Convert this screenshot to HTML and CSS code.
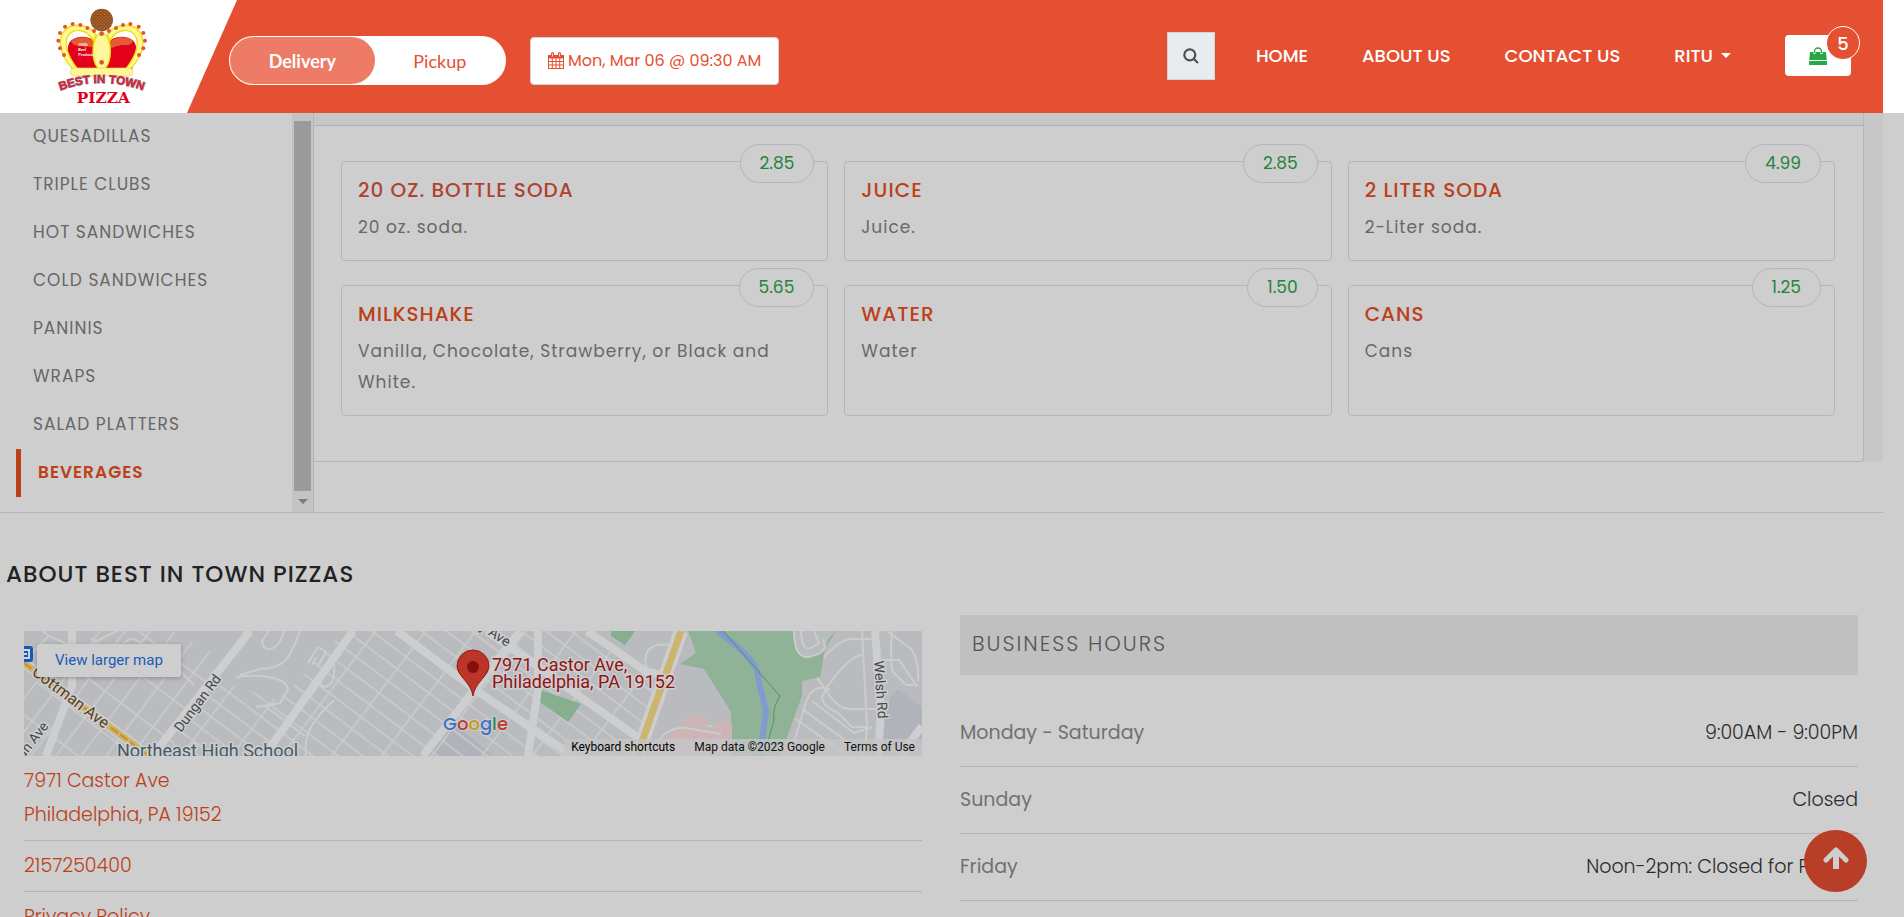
FILE: index.html
```html
<!DOCTYPE html>
<html lang="en">
<head>
<meta charset="utf-8">
<title>Best In Town Pizza</title>
<link rel="stylesheet" href="styles.css">
</head>
<body>
<header class="site-header">
  <a class="brand" href="#" aria-label="Best In Town Pizza">
    <svg class="brand-logo" viewBox="0 0 390 339" role="img" aria-label="Best In Town Pizza">
      <defs>
        <pattern id="crumb" width="10" height="10" patternUnits="userSpaceOnUse">
          <rect width="10" height="10" fill="#8b4a1c"/><circle cx="3" cy="3" r="2" fill="#d09048"/><circle cx="8" cy="8" r="2" fill="#c58238"/>
        </pattern>
        <path id="arc" d="M54 274 Q185 224 317 274"/>
      </defs>
      <circle cx="185" cy="60" r="34" fill="url(#crumb)"/>
      <path d="M96 208C84 170 76 140 92 122c24-20 66-14 82 12v74z" fill="#e2001a"/>
      <path d="M276 208c12-38 20-68 4-86-24-20-66-14-82 12v74z" fill="#e2001a"/>
      <path d="M92 124c22-20 62-14 76 8-8 22-20-2-32 12-12-16-26 6-44-20z" fill="#e55a32"/>
      <path d="M280 124c-22-20-62-14-76 8 8 22 20 4 32 6 14-8 30 6 44-14z" fill="#e55a32"/>
      <path d="M104 210C66 180 52 130 68 100 86 66 144 68 168 104l-8 18C140 84 96 82 82 112c-12 30 6 62 28 92z" fill="#fff59a" stroke="#ece400" stroke-width="4"/>
      <path d="M266 210c38-30 52-80 36-110-18-34-76-32-100 4l8 18c20-38 64-40 78-10 12 30-6 62-28 92z" fill="#fff59a" stroke="#ece400" stroke-width="4"/>
      <path d="M185 98c34 8 34 96 5 110h-10c-29-14-29-102 5-110z" fill="#fff59a" stroke="#ece400" stroke-width="4"/>
      <rect x="91" y="204" width="188" height="24" rx="12" fill="#fff59a" stroke="#e6dc4a" stroke-width="2"/>
      <g fill="#e55230">
        <circle cx="55" cy="122" r="6"/><circle cx="60" cy="99" r="6"/><circle cx="75" cy="80" r="6"/><circle cx="98" cy="72" r="6"/><circle cx="121" cy="75" r="6"/><circle cx="142" cy="84" r="6"/><circle cx="162" cy="93" r="6"/><circle cx="60" cy="145" r="6"/><circle cx="72" cy="165" r="6"/>
        <circle cx="315" cy="122" r="6"/><circle cx="310" cy="99" r="6"/><circle cx="296" cy="80" r="6"/><circle cx="271" cy="72" r="6"/><circle cx="249" cy="75" r="6"/><circle cx="228" cy="84" r="6"/><circle cx="207" cy="93" r="6"/><circle cx="310" cy="145" r="6"/><circle cx="297" cy="165" r="6"/>
        <circle cx="185" cy="101" r="7"/><circle cx="185" cy="187" r="7"/>
      </g>
      <g class="logo-note"><text x="115" y="139">100%</text><text x="115" y="153">Beef</text><text x="115" y="167">Products</text></g>
      <text class="logo-arch"><textPath href="#arc" startOffset="50%">BEST IN TOWN</textPath></text>
      <text class="logo-name" x="190" y="309">PIZZA</text>
    </svg>
  </a>
  <div class="header-bar">
    <div class="order-tools">
      <div class="mode-toggle">
        <button class="mode mode-active" type="button">Delivery</button>
        <button class="mode" type="button">Pickup</button>
      </div>
      <button class="date-button" type="button">
        <svg class="calendar-icon" viewBox="0 0 16 17" aria-hidden="true"><path fill="currentColor" fill-rule="evenodd" d="M0 3h3V1.500a1.500 1.500 0 0 1 3 0V3h4V1.500a1.500 1.500 0 0 1 3 0V3h3v14H0zM1 6.500V9h2.800V6.500zm3.800 0V9h2.700V6.500zm3.700 0V9h2.700V6.500zm3.700 0V9H15V6.500zM1 10v2.500h2.800V10zm3.800 0v2.500h2.700V10zm3.700 0v2.500h2.700V10zm3.700 0v2.500H15V10zM1 13.500V16h2.800v-2.500zm3.800 0V16h2.700v-2.500zm3.700 0V16h2.700v-2.500zm3.700 0V16H15v-2.500z"/><path d="M4.500 1.500v3M11.500 1.500v3" stroke="#fff" stroke-width=".8"/></svg>
        Mon, Mar 06 @ 09:30 AM
      </button>
    </div>
    <div class="header-right">
      <button class="search-button" type="button" aria-label="Search">
        <svg viewBox="0 0 16 16" width="16" height="16" fill="none" stroke="#495057" stroke-width="2.200" aria-hidden="true"><circle cx="6.800" cy="6.800" r="5.500"/><path d="m10.700 10.700 4.300 4.300"/></svg>
      </button>
      <nav class="main-nav">
        <a href="#">HOME</a>
        <a href="#">ABOUT US</a>
        <a href="#">CONTACT US</a>
        <a href="#" class="user-link">RITU <span class="caret"></span></a>
      </nav>
      <button class="cart-button" type="button" aria-label="Cart, 5 items">
        <svg viewBox="0 0 18 18" width="18" height="18" aria-hidden="true"><path d="M5.500 6V4.500a3.500 3.500 0 0 1 7 0V6" fill="none" stroke="#28a745" stroke-width="1.300"/><path fill="#28a745" d="M1 5h3.500v2h2V5h5v2h2V5H17l.8 8H.2zM.1 14h17.800l.1 4H0z"/></svg>
        <span class="cart-count">5</span>
      </button>
    </div>
  </div>
</header>

<div class="page">
  <div class="menu-area">
    <aside class="sidebar">
      <ul class="category-list">
        <li><a href="#">QUESADILLAS</a></li>
        <li><a href="#">TRIPLE CLUBS</a></li>
        <li><a href="#">HOT SANDWICHES</a></li>
        <li><a href="#">COLD SANDWICHES</a></li>
        <li><a href="#">PANINIS</a></li>
        <li><a href="#">WRAPS</a></li>
        <li><a href="#">SALAD PLATTERS</a></li>
        <li><a href="#" class="current">BEVERAGES</a></li>
      </ul>
      <div class="scroll-track"><div class="scroll-thumb"></div><div class="scroll-arrow"></div></div>
    </aside>
    <main class="menu-main">
      <section class="menu-panel">
        <div class="panel-strip"></div>
        <div class="items">
          <article class="item"><span class="price">2.85</span><h3><a class="visited" href="#">20 OZ. BOTTLE SODA</a></h3><p>20 oz. soda.</p></article>
          <article class="item"><span class="price">2.85</span><h3><a href="#">JUICE</a></h3><p>Juice.</p></article>
          <article class="item"><span class="price">4.99</span><h3><a href="#">2 LITER SODA</a></h3><p>2-Liter soda.</p></article>
          <article class="item"><span class="price">5.65</span><h3><a href="#">MILKSHAKE</a></h3><p>Vanilla, Chocolate, Strawberry, or Black and White.</p></article>
          <article class="item"><span class="price">1.50</span><h3><a href="#">WATER</a></h3><p>Water</p></article>
          <article class="item"><span class="price">1.25</span><h3><a href="#">CANS</a></h3><p>Cans</p></article>
        </div>
      </section>
    </main>
  </div>

  <h2 class="about-title">ABOUT BEST IN TOWN PIZZAS</h2>
  <div class="about">
    <section class="contact">
      <div class="map">
        <svg class="map-art" viewBox="0 0 898 125" preserveAspectRatio="xMidYMid slice" role="img" aria-label="Map of 7971 Castor Ave">
          <defs>
            <pattern id="gridA" width="34" height="20" patternUnits="userSpaceOnUse" patternTransform="rotate(-53)"><path d="M0 0H34M0 0V20" stroke="#cbcccd" stroke-width="3" fill="none"/></pattern>
            <pattern id="gridB" width="40" height="15" patternUnits="userSpaceOnUse" patternTransform="rotate(37)"><path d="M0 0H40M0 0V15" stroke="#cbcccd" stroke-width="3" fill="none"/></pattern>
          </defs>
          <rect width="898" height="125" fill="#b9bbbe"/>
          <path d="M399 125 426 90 470 125zM874 58l24 18v49h-50l8-45z" fill="#b0b3ba"/>
          <path d="M0 60 75 0h75l60 34-70 91H0z" fill="url(#gridA)"/>
          <path d="M140 125 200 50l55 20 65-70h175l-90 125z" fill="url(#gridB)"/>
          <path d="M405 125 500 0h60l80 45-28 80z" fill="url(#gridB)"/>
          <g class="street">
            <path d="M0 30 25 5 18 0M25 5l23 10M48 22l45-22M100 12q8-8 16 0l40 28 14 14M260 0c-4 18-20 25-22 10l7-10M276 0c-8 18-10 38-40 38l-20 6M212 46c30-4 50 2 52 12l-8 14-24 4M310 32q2 22-10 24l-10-8M282 125c-2-18 2-32 28-56M281 105l-40-30"/>
            <path d="M284 32l10-16 8 5-8 14M288 34l4-8M623 40q-8-30 24-26M645 110l28-18 25 6"/>
            <path d="M838 0l5 95q0 12-5 30M848 8h-20c-14 0-40 28-38 34l15 22q10 14 20 14h35M838 24c-12 0-34 28-40 42 0 8 8 12 16 16l14 14h16M766 125l16-54q8-20 24-12M778 78l50 36M772 88l50 36M788 70l42 32 18-6M855 29h20l18 26M863 0l24 18q8 10 7 32M868 0q-2 20 0 40l14 14h12"/>
          </g>
          <path d="M664 0 672 22 656 33 680 38 707 81 708 125h48l22-60v-15l18-4 5-28 11-18z" fill="#90b398"/>
          <path d="M770 0c0 18 5 27 14 26l17-8 3-10L812 0z" fill="#b9bbbe"/>
          <path d="M770 0c0 18 5 27 14 26 10-2 16-6 17-10l-2-8M777 0c0 12 4 20 10 17l8-5-5-12" class="street"/>
          <path d="M514 58 557 73 544 91 514 70zM587 0h24l-10 14-14-9z" fill="#86ae8f"/>
          <path d="M656 95 664 83l20 5v12l10-9 14 2v32h-86z" fill="#cdb5b7"/>
          <path class="street" d="M634 110q12-15 28-13l35 6"/>
          <path d="M694 0c12 10 38 28 40 44s6 26 8 36l-6 45" fill="none" stroke="#7f9bd0" stroke-width="6"/>
          <path d="M699 0 756 65q-8 12-6 24l-6 22" fill="none" stroke="#4d9560" stroke-width="1"/>
          <g class="road">
            <path d="M226 0 136 115l-8 10M48 0v55L22 125M329 0 240 125M373 0l83 62 93 63M463 0l153 108M496 0 399 125M514 0v58l-10 67M563 0l60 41 24 5M851 0l6 80-3 45M898 95l-22 30"/>
          </g>
          <path d="M657 0 613 125" stroke="#cdced0" stroke-width="14"/><path d="M657 0 613 125" stroke="#ceb56f" stroke-width="7"/>
          <path d="M0 32 125 125" stroke="#cdced0" stroke-width="10"/><path d="M0 32 125 125" stroke="#cdb273" stroke-width="7"/><path d="M0 32 125 125" stroke="#c9921c" stroke-width="2" stroke-dasharray="9 3"/>
          <rect x="-8" y="15" width="17" height="16" rx="3" fill="#1459b8"/><path d="M0 19h5v8H0M0 23h3" fill="none" stroke="#d5d5d5" stroke-width="2"/>
          <g class="map-label">
            <text transform="translate(7 43) rotate(37)" font-size="16" fill="#5c3d14">Cottman Ave</text>
            <text transform="translate(157 102) rotate(-53)" font-size="14">Dungan Rd</text>
            <text transform="translate(-5 134) rotate(-52)" font-size="14">kun Ave</text>
            <text transform="translate(455 -2) rotate(33)" font-size="14">y Ave</text>
            <text transform="translate(850 30) rotate(86)" font-size="14">Welsh Rd</text>
            <text x="93" y="126" font-size="18" fill="#465a66">Northeast High School</text>
            <text x="468" y="40" font-size="18" fill="#8f1414">7971 Castor Ave,</text>
            <text x="468" y="57" font-size="18" fill="#8f1414">Philadelphia, PA 19152</text>
          </g>
          <path d="M449 65c-2-14-16-20-16-30a16 16 0 0 1 32 0c0 10-14 16-16 30z" fill="#bd3429" stroke="#941b14"/><circle cx="449" cy="36" r="6" fill="#850f0d"/>
          <text class="map-brand" x="419" y="99"><tspan fill="#3f70c8">G</tspan><tspan fill="#bd3c31">o</tspan><tspan fill="#c89a15">o</tspan><tspan fill="#3f70c8">g</tspan><tspan fill="#2d8a48">l</tspan><tspan fill="#bd3c31">e</tspan></text>
        </svg>
        <a class="map-link" href="#">View larger map</a>
        <div class="map-credit"><button type="button">Keyboard shortcuts</button><span>Map data ©2023 Google</span><a href="#">Terms of Use</a></div>
      </div>
      <ul class="contact-list">
        <li><a href="#">7971 Castor Ave<br>Philadelphia, PA 19152</a></li>
        <li><a href="#">2157250400</a></li>
        <li><a href="#">Privacy Policy</a></li>
      </ul>
    </section>
    <section class="hours">
      <h3 class="hours-title">BUSINESS HOURS</h3>
      <dl class="hours-list">
        <div><dt>Monday - Saturday</dt><dd>9:00AM - 9:00PM</dd></div>
        <div><dt>Sunday</dt><dd>Closed</dd></div>
        <div><dt>Friday</dt><dd>Noon-2pm: Closed for Prayer</dd></div>
      </dl>
    </section>
  </div>
</div>
<button class="to-top" type="button" aria-label="Back to top">
  <svg viewBox="0 0 26 24" width="26" height="24" fill="none" stroke="#cecece" stroke-width="6" aria-hidden="true"><path d="M13 23V5"/><path d="M3 14 13 4l10 10" stroke-linejoin="round" stroke-linecap="round" stroke-width="5"/></svg>
</button>
</body>
</html>
```
FILE: styles.css
```css
* { box-sizing: border-box; }
body {
  margin: 0;
  height: 100vh;
  overflow: hidden;
  background: #cecece;
  font-family: Poppins, Inter, "Open Sans", sans-serif;
  font-size: 17px;
  color: #2b2b2b;
}
button { font: inherit; border: 0; padding: 0; cursor: pointer; }
a { text-decoration: none; color: inherit; }
ul, dl { list-style: none; margin: 0; padding: 0; }

.site-header { display: flex; height: 113px; padding-right: 21px; background: #fff; }
.brand { flex: none; width: 187px; padding-left: 40px; }
.brand-logo { display: block; width: 130px; height: 113px; }
.logo-note { font: 700 11px "Liberation Sans", sans-serif; fill: #fff; }
.logo-arch { font: 700 35px "Liberation Sans", sans-serif; fill: #e2223a; stroke: #77777a; stroke-width: 3px; paint-order: stroke; text-anchor: middle; }
.logo-name { font: 700 46px "DejaVu Serif", serif; fill: #e2001a; text-anchor: middle; }
.header-bar {
  flex: 1;
  display: flex;
  justify-content: space-between;
  align-items: center;
  padding: 0 32px 0 42px;
  background: #e55032;
  clip-path: polygon(50px 0, 100% 0, 100% 100%, 0 100%);
}
.order-tools { display: flex; align-items: center; gap: 24px; padding-top: 8px; }
.mode-toggle { display: flex; width: 277px; height: 49px; padding: 1px; border-radius: 25px; background: #fff; }
.mode { flex: 1 1 auto; padding: 0 35px; border-radius: 24px; background: none; color: #e55032; font-family: Lato, sans-serif; font-size: 18px; font-weight: 400; }
.mode-active { background: #ed7b65; color: #fff; font-weight: 700; }
.date-button { display: flex; align-items: center; gap: 4px; height: 48px; padding: 0 17px; border: 1px solid #ced4da; border-radius: 4px; background: #fff; color: #e55032; font-size: 16px; font-weight: 400; }
.calendar-icon { width: 16px; height: 17px; }
.header-right { display: flex; align-items: center; padding-bottom: 2px; }
.search-button { display: grid; place-items: center; width: 48px; height: 48px; margin-right: 41px; border: 1px solid #ced4da; background: #e9ecef; }
.main-nav { display: flex; gap: 54px; margin-right: 54px; color: #fff; font-size: 18px; font-weight: 500; }
.user-link { display: flex; align-items: center; gap: 8px; }
.caret { border: 5px solid transparent; border-top-color: #fff; border-bottom: 0; }
.cart-button { position: relative; display: grid; place-items: center; width: 66px; height: 41px; border-radius: 4px; background: #fff; }
.cart-count { position: absolute; top: -9px; right: -9px; width: 34px; height: 34px; border: 1px solid #fff; border-radius: 50%; background: #e55032; color: #fff; font-size: 18px; font-weight: 500; line-height: 34px; }

.page { margin-right: 21px; }
.menu-area { display: flex; border-bottom: 1px solid #b3b5b8; }
.sidebar { display: flex; flex: none; width: 314px; border-right: 1px solid #b3b5b8; }
.category-list { flex: 1; padding: 0 0 15px 16px; }
.category-list a { display: block; padding: 0 0 2px 17px; color: #676767; line-height: 46px; letter-spacing: 1px; }
.category-list .current { border-left: 5px solid #bc4019; color: #bc4019; font-weight: 600; }
.scroll-track { display: flex; flex-direction: column; align-items: center; width: 21px; padding: 8px 0; background: #c3c3c3; }
.scroll-thumb { flex: 1; width: 17px; background: #9b9b9b; }
.scroll-arrow { margin-top: 8px; border: 5px solid transparent; border-top-color: #7c7c7c; border-bottom: 0; }
.menu-main { flex: 1; align-self: flex-start; padding-right: 19px; background: #c7c7c7; }
.menu-panel { border: 1px solid #b3b5b8; border-width: 0 1px 1px 0; border-radius: 0 0 4px 0; background: #cecece; }
.panel-strip { height: 13px; border-bottom: 1px solid #b0b0b0; background: #c7c7c7; }
.items { display: grid; grid-template-columns: repeat(3, 1fr); gap: 24px 16px; padding: 35px 28px 45px 27px; }
.item { position: relative; padding: 12px 16px 17px; border: 1px solid #b3b5b8; border-radius: 4px; }
.item h3 { margin: 0 0 5px; font-size: 20px; font-weight: 500; line-height: 33px; letter-spacing: 1px; color: #bc4019; }
.item .visited { color: #ae4335; }
.item p { margin: 0; line-height: 31px; letter-spacing: 1px; color: #686868; }
.price { position: absolute; top: -18px; right: 13px; height: 39px; padding: 0 19px; border: 1px solid #b3b5b8; border-radius: 20px; background: #cecece; color: #23843c; line-height: 37px; }

.about-title { margin: 43px 6px 23px; font-size: 23px; font-weight: 500; line-height: 36px; letter-spacing: 1px; color: #222; }
.about { display: grid; grid-template-columns: 1fr 1fr; gap: 38px; padding: 0 25px 0 24px; }
.contact { padding-top: 16px; }
.map { position: relative; height: 125px; overflow: hidden; font-family: Roboto, sans-serif; }
.map-art { display: block; width: 100%; height: 100%; }
.street { fill: none; stroke: #cbcccd; stroke-width: 2px; }
.road { fill: none; stroke: #cdced0; stroke-width: 8px; }
.map-label { fill: #44474a; stroke: #cdced0; stroke-width: 3px; paint-order: stroke; }
.map-brand { font: 500 18px Poppins, Inter, sans-serif; stroke: #cdced0; stroke-width: 2px; paint-order: stroke; }
.map-link { position: absolute; top: 13px; left: 13px; padding: 0 18px; border-radius: 2px; background: #cecece; box-shadow: 0 1px 4px #0004; color: #1a5cb8; font-size: 15px; line-height: 33px; }
.map-credit { position: absolute; right: 0; bottom: 0; display: flex; gap: 19px; padding: 0 7px; background: #c6c6c6cc; color: #111; font-size: 12px; line-height: 17px; }
.map-credit button { background: none; }
.contact-list { font-size: 19px; font-weight: 300; color: #bc4019; }
.contact-list li { padding: 8px 0; border-bottom: 1px solid #b3b5b8; line-height: 34px; }
.hours-title { margin: 0; padding: 0 12px 3px; background: #c0c0c0; color: #555; font-size: 21px; font-weight: 300; line-height: 57px; letter-spacing: 2px; }
.hours-list { padding-top: 25px; font-size: 19px; }
.hours-list div { display: flex; justify-content: space-between; border-bottom: 1px solid #b3b5b8; line-height: 66px; }
.hours-list dt { color: #717171; }
.hours-list dd { margin: 0; font-weight: 300; }
.to-top { position: fixed; right: 37px; bottom: 25px; display: grid; place-items: center; width: 63px; height: 62px; padding-bottom: 6px; border-radius: 50%; background: #b83e28; }
```
